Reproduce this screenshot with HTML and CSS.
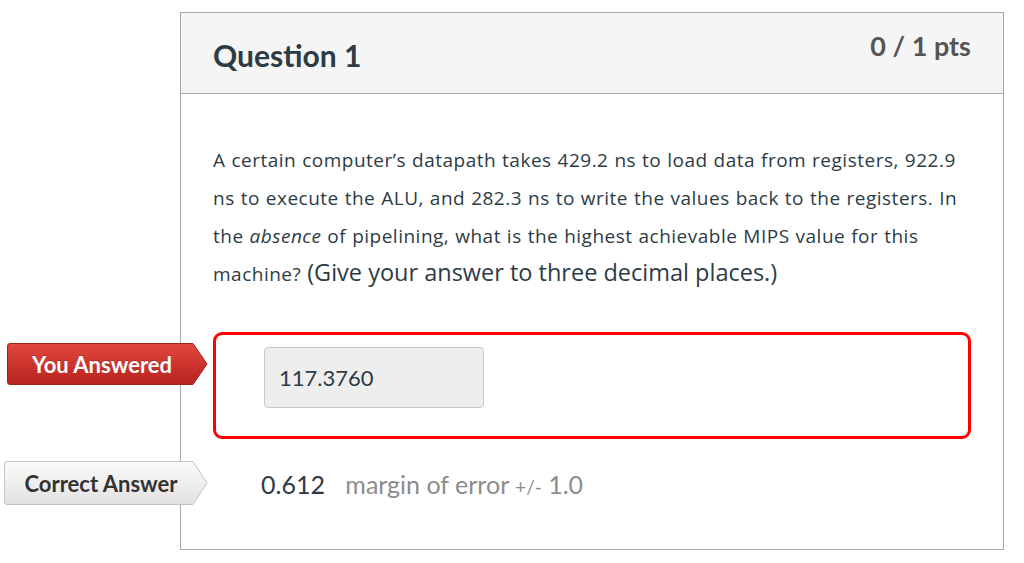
FILE: index.html
```html
<!DOCTYPE html>
<html>
<head>
<meta charset="utf-8">
<link rel="stylesheet" href="styles.css">
</head>
<body>
<div class="page">
  <div class="card">
    <div class="card-header">
      <h2 class="title">Question 1</h2>
      <div class="pts">0 / 1 pts</div>
    </div>
    <div class="card-body">
      <p class="question">A certain computer’s datapath takes 429.2 ns to load data from registers, 922.9<br>ns to execute the ALU, and 282.3 ns to write the values back to the registers. In<br>the <em>absence</em> of pipelining, what is the highest achievable MIPS value for this<br>machine? <span class="big">(Give your answer to three decimal places.)</span></p>
      <div class="answer-row wrong">
        <div class="tag tag-red">
          <svg class="tag-shape" width="201" height="42" viewBox="0 0 201 42">
            <defs>
              <linearGradient id="gr" x1="0" y1="0" x2="0" y2="1">
                <stop offset="0" stop-color="#e2473f"/>
                <stop offset="1" stop-color="#b8231f"/>
              </linearGradient>
            </defs>
            <path d="M3 0.5 H186 L200 21 L186 41.5 H3 Q0.5 41.5 0.5 39 V3 Q0.5 0.5 3 0.5 Z" fill="url(#gr)" stroke="#a8201c" stroke-width="1"/>
          </svg>
          <span class="tag-text">You Answered</span>
        </div>
        <div class="answer-box">
          <div class="answer-input">117.3760</div>
        </div>
      </div>
      <div class="answer-row correct">
        <div class="tag tag-gray">
          <svg class="tag-shape" width="204" height="44" viewBox="0 0 204 44">
            <defs>
              <linearGradient id="gg" x1="0" y1="0" x2="0" y2="1">
                <stop offset="0" stop-color="#fbfbfb"/>
                <stop offset="1" stop-color="#e2e2e2"/>
              </linearGradient>
            </defs>
            <path d="M3 0.5 H189 L203 22 L189 43.5 H3 Q0.5 43.5 0.5 41 V3 Q0.5 0.5 3 0.5 Z" fill="url(#gg)" stroke="#c4c4c4" stroke-width="1"/>
          </svg>
          <span class="tag-text">Correct Answer</span>
        </div>
        <div class="correct-value">
          <span class="val">0.612</span>
          <span class="margin">margin of error <span class="pm">+/-</span> 1.0</span>
        </div>
      </div>
    </div>
  </div>
</div>
</body>
</html>
```

FILE: styles.css
```css
html, body {
  margin: 0;
  padding: 0;
  background: #ffffff;
}
body {
  font-family: Lato, "Noto Sans", sans-serif;
  color: #2d3b45;
}
.page {
  padding: 12px 0 0 180px;
  width: 824px;
}
.card {
  border: 1px solid #a9a9a9;
  background: #fff;
}
.card-header {
  height: 80px;
  background: #f5f5f5;
  border-bottom: 1px solid #a9a9a9;
  display: flex;
  justify-content: space-between;
  align-items: flex-start;
  padding: 0 32px;
}
.title {
  margin: 0;
  padding-top: 24px;
  font-size: 30px;
  font-weight: 700;
  line-height: 36px;
  color: #2d3b45;
}
.pts {
  padding-top: 17px;
  font-size: 27px;
  font-weight: 700;
  line-height: 32px;
  color: #555;
}
.card-body {
  padding: 47px 32px 44px 32px;
}
.question {
  margin: 0;
  font-family: "Open Sans", Lato, sans-serif;
  font-size: 19px;
  letter-spacing: 0.5px;
  word-spacing: 0.5px;
  line-height: 38px;
}
.question .big {
  font-family: "Open Sans", Lato, sans-serif;
  font-size: 23.5px;
  letter-spacing: 0;
  word-spacing: 0;
  line-height: 20px;
}
.answer-row {
  position: relative;
}
.wrong {
  margin-top: 39px;
}
.answer-box {
  border: 3px solid #ff0000;
  border-radius: 9px;
  padding: 12px 0 0 48px;
  box-sizing: border-box;
  height: 107px;
}
.answer-input {
  width: 204px;
  height: 59px;
  background: #eeeeee;
  border: 1px solid #c8c8c8;
  border-radius: 4px;
  font-size: 22px;
  line-height: 59px;
  padding-left: 14px;
}
.tag {
  position: absolute;
  display: flex;
  align-items: center;
}
.tag-shape {
  position: absolute;
  left: 0;
  top: 0;
}
.tag-red {
  left: -206px;
  top: 11px;
  width: 201px;
  height: 42px;
}
.tag-gray {
  left: -209px;
  top: 8px;
  width: 204px;
  height: 44px;
}
.tag-text {
  position: relative;
  width: 190px;
  text-align: center;
  font-size: 22px;
  font-weight: 700;
}
.tag-red .tag-text {
  color: #fff;
  text-shadow: 0 -1px 0 rgba(0,0,0,0.2);
}
.tag-gray .tag-text {
  color: #333;
  width: 194px;
}
.correct {
  margin-top: 14px;
  height: 52px;
}
.correct-value {
  padding: 16px 0 0 48px;
  font-size: 25px;
  line-height: 30px;
}
.val {
  color: #2d3b45;
}
.margin {
  color: #8c8c8c;
  margin-left: 14px;
}
.pm {
  font-size: 19px;
}
```
